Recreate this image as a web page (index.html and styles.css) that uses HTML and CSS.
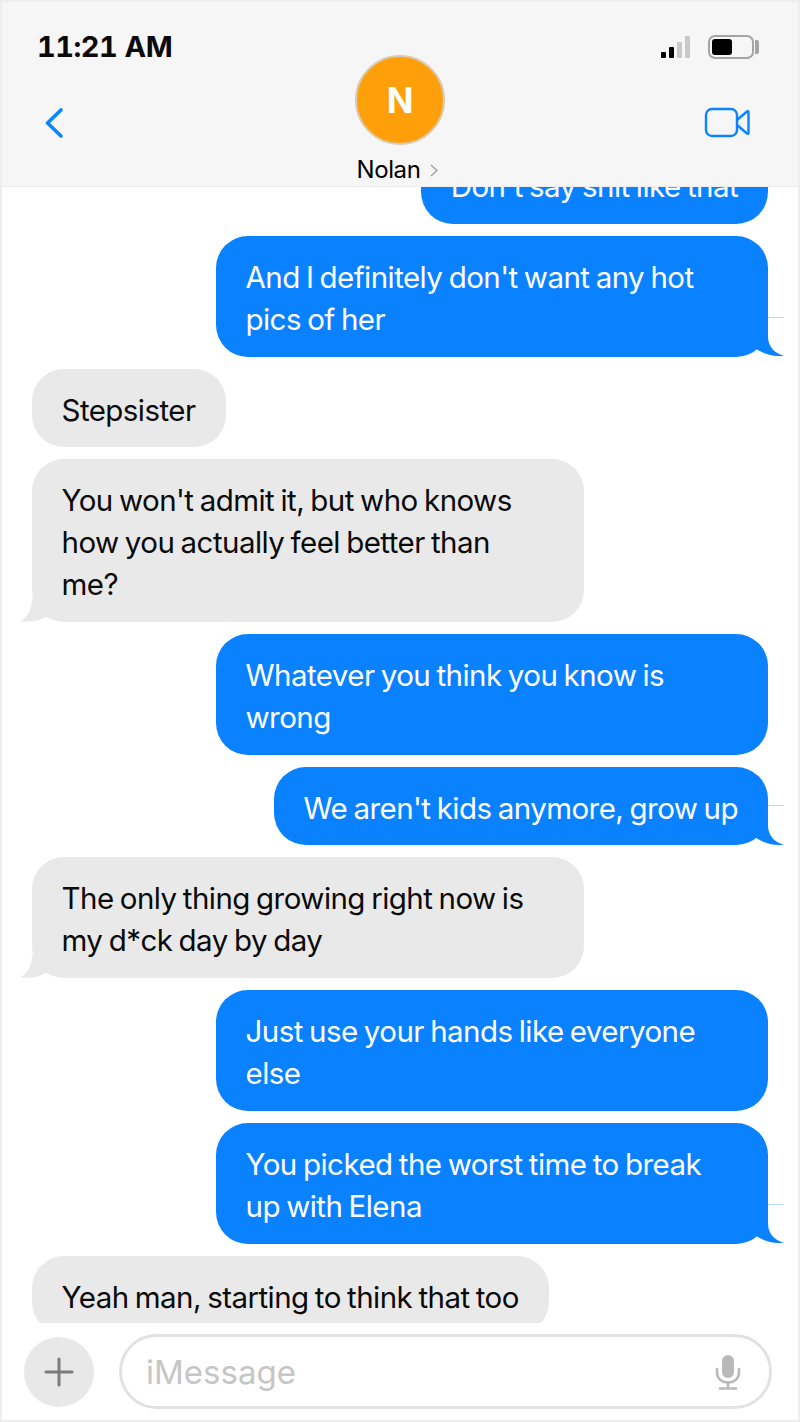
FILE: index.html
```html
<!DOCTYPE html>
<html lang="en">
<head>
    <meta charset="UTF-8">
    <meta name="viewport" content="width=device-width, initial-scale=1.0">
    <title>Nolan</title>
    <link rel="stylesheet" href="styles.css">
</head>
<body>
    <div class="phone">
        <header class="top">
            <div class="status-bar">
                <span class="clock">11:21 AM</span>
                <div class="status-icons">
                    <div class="signal">
                        <span class="bar on b1"></span>
                        <span class="bar on b2"></span>
                        <span class="bar b3"></span>
                        <span class="bar b4"></span>
                    </div>
                    <div class="battery">
                        <div class="battery-body"><div class="battery-level"></div></div>
                        <div class="battery-cap"></div>
                    </div>
                </div>
            </div>
            <div class="nav">
                <svg class="back" width="20" height="32" viewBox="0 0 20 32">
                    <path d="M17 3 L3.5 16 L17 29" fill="none" stroke="#0a84ff" stroke-width="3.6" stroke-linecap="round" stroke-linejoin="round"/>
                </svg>
                <div class="contact">
                    <div class="avatar">N</div>
                    <div class="contact-name">
                        <span>Nolan</span>
                        <svg width="8" height="13" viewBox="0 0 8 13">
                            <path d="M1 1 L7 6.5 L1 12" fill="none" stroke="#9a9a9a" stroke-width="1.2"/>
                        </svg>
                    </div>
                </div>
                <svg class="video" width="46" height="32" viewBox="0 0 46 32">
                    <rect x="2" y="2" width="31" height="27" rx="6" fill="none" stroke="#0a84ff" stroke-width="2.4"/>
                    <path d="M33 13 L43 4.5 Q44.500 3.500 44.500 5.500 V25.500 Q44.500 27.500 43 26.500 L33 18" fill="none" stroke="#0a84ff" stroke-width="2.4" stroke-linejoin="round"/>
                </svg>
            </div>
        </header>

        <main class="thread">
            <div class="messages">
                <div class="msg out">Don't say shit like that</div>
                <div class="msg out tail">And I definitely don't want any hot pics of her</div>
                <div class="msg in">Stepsister</div>
                <div class="msg in tail full">You won't admit it, but who knows how you actually feel better than<br>me?</div>
                <div class="msg out">Whatever you think you know is wrong</div>
                <div class="msg out tail">We aren't kids anymore, grow up</div>
                <div class="msg in tail">The only thing growing right now is my d*ck day by day</div>
                <div class="msg out">Just use your hands like everyone else</div>
                <div class="msg out tail">You picked the worst time to break up with Elena</div>
                <div class="msg in">Yeah man, starting to think that too</div>
            </div>
        </main>

        <footer class="composer">
            <div class="plus">
                <svg width="30" height="30" viewBox="0 0 30 30">
                    <path d="M15 2 V28 M2 15 H28" stroke="#7b7b7b" stroke-width="3" stroke-linecap="round"/>
                </svg>
            </div>
            <div class="input">
                <span class="placeholder">iMessage</span>
                <svg class="mic" width="28" height="36" viewBox="0 0 28 36">
                    <rect x="8" y="1" width="12" height="23" rx="6" fill="#b9b9b9"/>
                    <path d="M3 15 V18 C3 25 8 28.500 14 28.500 C20 28.500 25 25 25 18 V15" fill="none" stroke="#b9b9b9" stroke-width="2.6" stroke-linecap="round"/>
                    <path d="M14 28.500 V34 M5 34.500 H23" stroke="#b9b9b9" stroke-width="2.6"/>
                </svg>
            </div>
        </footer>
    </div>
</body>
</html>
```

FILE: styles.css
```css
* {
    margin: 0;
    padding: 0;
    box-sizing: border-box;
}

body {
    background: #fff;
    font-family: Inter, "Liberation Sans", sans-serif;
    overflow: hidden;
}

.phone {
    width: 800px;
    height: 1422px;
    display: flex;
    flex-direction: column;
    border: 2px solid #eeeeee;
    background: #fff;
}

/* Header */
.top {
    height: 185px;
    flex: none;
    background: #f6f6f6;
    border-bottom: 1px solid #ececec;
}

.status-bar {
    display: flex;
    justify-content: space-between;
    align-items: center;
    padding: 29px 39px 0 35px;
    height: 60px;
}

.clock {
    font-size: 29px;
    font-weight: 700;
    color: #0a0a0a;
    font-variant-numeric: tabular-nums;
    letter-spacing: -0.5px;
}

.status-icons {
    display: flex;
    align-items: flex-end;
    gap: 18px;
}

.signal {
    display: flex;
    align-items: flex-end;
    gap: 2.500px;
    height: 22px;
    margin-bottom: 1px;
}

.bar {
    width: 5.500px;
    background: #c8c8c8;
    border-radius: 1px;
}

.bar.on {
    background: #000;
}

.b1 { height: 6px; }
.b2 { height: 11px; }
.b3 { height: 16px; }
.b4 { height: 22px; }

.battery {
    display: flex;
    align-items: center;
    gap: 1px;
}

.battery-body {
    width: 46px;
    height: 24px;
    border: 2px solid #a5a5a5;
    border-radius: 7px;
    padding: 2px;
}

.battery-level {
    width: 20px;
    height: 100%;
    background: #000;
    border-radius: 3px;
}

.battery-cap {
    width: 4px;
    height: 14px;
    background: #a5a5a5;
    border-radius: 0 2px 2px 0;
}

.nav {
    display: grid;
    grid-template-columns: 1fr auto 1fr;
    margin-top: -7px;
    padding: 0 48px;
}

.back {
    margin-top: 52px;
    margin-left: -6px;
}

.video {
    justify-self: end;
    margin-top: 52px;
}

.contact {
    display: flex;
    flex-direction: column;
    align-items: center;
}

.avatar {
    width: 90px;
    height: 90px;
    border-radius: 50%;
    background: #ff9f0a;
    border: 2px solid #d9cbb0;
    color: #fff;
    font-size: 35px;
    font-weight: 700;
    display: flex;
    align-items: center;
    justify-content: center;
}

.contact-name {
    display: flex;
    align-items: center;
    gap: 10px;
    margin-top: 10px;
    margin-left: -5px;
    font-size: 24px;
    line-height: 30px;
    color: #000;
    letter-spacing: -0.4px;
}

/* Messages */
.thread {
    flex: 1;
    min-height: 0;
    overflow: hidden;
}

.messages {
    display: flex;
    flex-direction: column;
    gap: 12px;
    margin-top: -42px;
    padding: 0 30px;
}

.msg {
    position: relative;
    max-width: 552px;
    padding: 21px 30px 16px 29.500px;
    border-radius: 32px;
    font-size: 29.500px;
    line-height: 41.850px;
    letter-spacing: -0.55px;
    word-spacing: -1.5px;
}

.msg.full {
    width: 552px;
}

.msg.out {
    align-self: flex-end;
    background: #0a82ff;
    color: #fff;
}

.msg.in {
    align-self: flex-start;
    background: #e9e9e9;
    color: #0a0a0a;
}

/* bubble tails */
.msg.tail::after {
    content: "";
    position: absolute;
    bottom: 0;
    width: 32px;
    height: 32px;
}

.msg.out.tail::after {
    right: -16px;
    background: #0a82ff;
    clip-path: path("M16 0 L16 12 C16 22 23 29.500 32 31 C22 33 10 29 2 23 Z");
}

.msg.in.tail::after {
    left: -12px;
    background: #e9e9e9;
    clip-path: path("M12 8 C12 20 7 28 0 31 C12 33 20 30 27 26 Z");
}

.msg.out.tail::before {
    content: "";
    position: absolute;
    right: -16px;
    bottom: 39px;
    width: 16px;
    height: 1px;
    background: #b9d9ff;
}

/* Composer */
.composer {
    flex: none;
    height: 97px;
    display: flex;
    align-items: center;
    gap: 25px;
    padding: 0 26px 0 22px;
}

.plus {
    width: 70px;
    height: 70px;
    border-radius: 50%;
    background: #e8e8e8;
    display: flex;
    align-items: center;
    justify-content: center;
}

.input {
    flex: 1;
    height: 75px;
    border: 3px solid #e2e2e2;
    border-radius: 38px;
    display: flex;
    align-items: center;
    justify-content: space-between;
    padding: 0 27px 0 24px;
}

.placeholder {
    font-size: 33px;
    color: #c6c6c6;
    margin-top: 1px;
}
```
